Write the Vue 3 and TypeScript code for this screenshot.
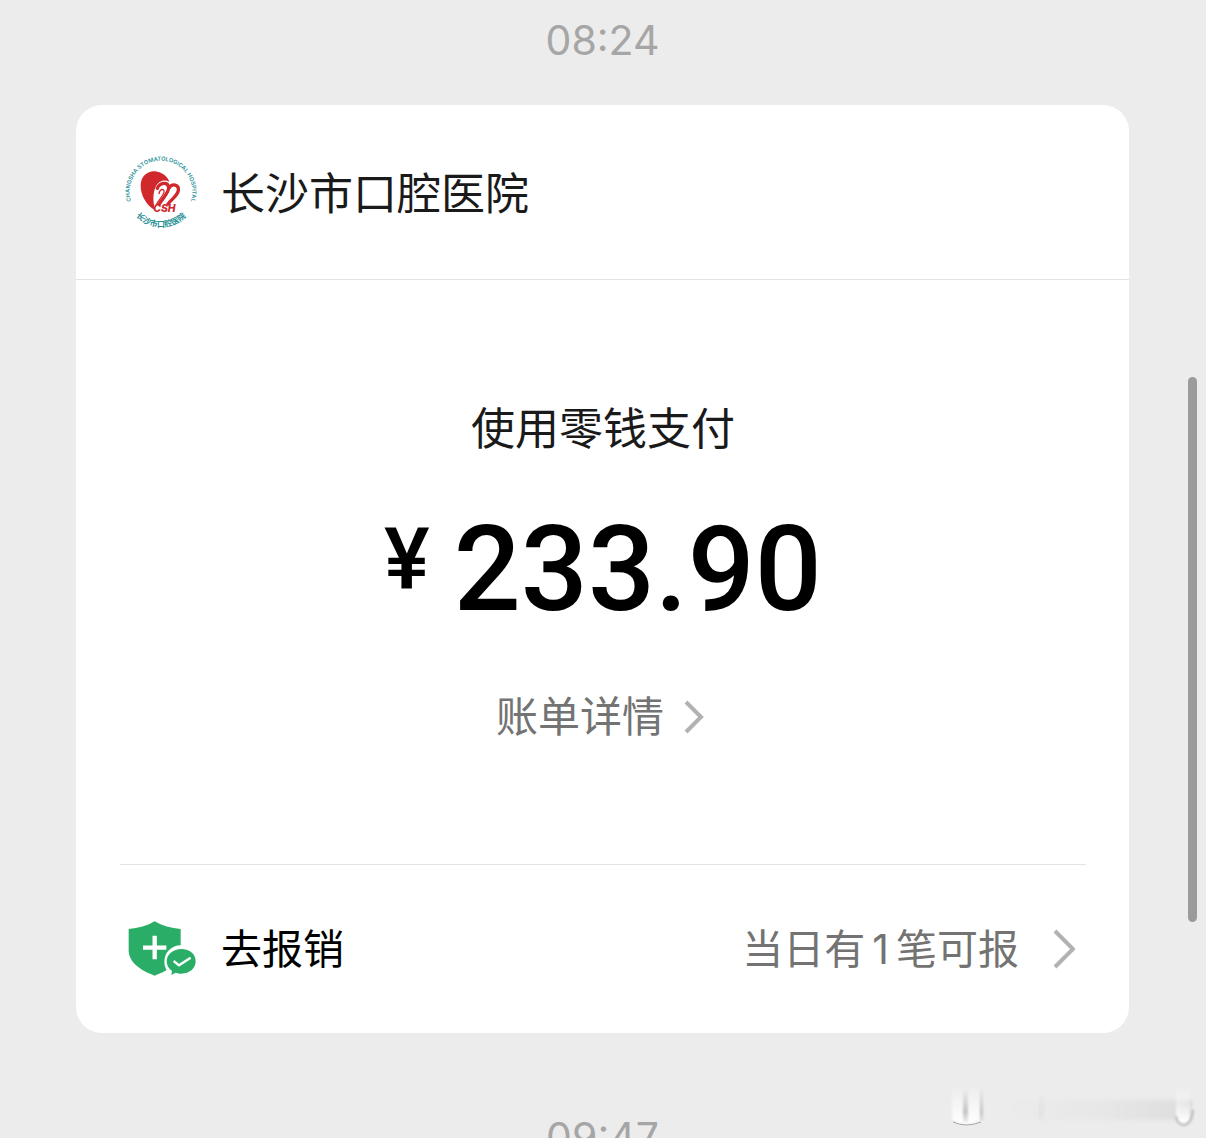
<script setup lang="ts">
interface Payment {
  merchant: string
  method: string
  amount: string
  claimable: number
}

const sentAt = '08:24'
const nextAt = '09:47'
const payment: Payment = {
  merchant: '长沙市口腔医院',
  method: '使用零钱支付',
  amount: '233.90',
  claimable: 1,
}
</script>

<template>
  <main class="chat">
    <time class="stamp">{{ sentAt }}</time>

    <article class="card">
      <header class="head">
        <svg class="logo" viewBox="0 0 222 222" role="img" aria-label="CSH">
          <defs>
            <path id="ring-top" d="M25 149 A94 94 0 1 1 197 149" />
            <path id="ring-bottom" d="M8 135 A106 106 0 0 0 214 135" />
          </defs>
          <text class="ring-en">
            <textPath href="#ring-top" startOffset="50%">CHANGSHA STOMATOLOGICAL HOSPITAL</textPath>
          </text>
          <text class="ring-zh">
            <textPath href="#ring-bottom" startOffset="50%">长沙市口腔医院</textPath>
          </text>
          <path
            class="red"
            d="M94 166 C66 150 50 120 50 92 C50 60 76 44 100 50 C118 54 132 66 136 80 C118 72 103 80 96 94 C86 114 86 140 94 166Z"
          />
          <path class="line" d="M100 100 C106 84 131 78 134 97 C136 112 117 128 106 147" />
          <path class="line" d="M136 98 C144 84 166 88 163 107 C160 123 143 132 132 147" />
          <path class="line thin" d="M105 116 C108 100 122 100 120 112 C117 124 104 134 97 149" />
          <text class="csh" x="88" y="171">CSH</text>
        </svg>
        <h1 class="merchant">{{ payment.merchant }}</h1>
      </header>

      <section class="body">
        <p class="method">{{ payment.method }}</p>
        <p class="amount"><span class="yen">¥</span><span>{{ payment.amount }}</span></p>
        <a class="detail" href="#bill">
          账单详情
          <svg class="chev" viewBox="0 0 20 34" aria-hidden="true"><path d="M2 2 L17 17 L2 32" /></svg>
        </a>
      </section>

      <a class="claim" href="#claim">
        <svg class="shield" viewBox="0 0 204 168" aria-hidden="true">
          <path
            class="green"
            d="M80 1 C102 14 129 22 158 24 V88 C158 124 122 149 80 164 C38 149 2 124 2 88 V24 C31 22 58 14 80 1Z"
          />
          <path class="plus" d="M80 44 V115 M45 80 H115" />
          <circle class="halo" cx="158" cy="122" r="49" />
          <path
            class="green"
            d="M160 84 C186 84 203 99 203 121 C203 143 184 158 160 158 C154 158 148 157 143 155 L130 162 L132 150 C122 143 116 133 116 121 C116 99 137 84 160 84Z"
          />
          <path class="tick" d="M137 120 L153 133 L188 110" />
        </svg>
        <span class="claim-name">去报销</span>
        <span class="claim-note">当日有<span class="count">{{ payment.claimable }}</span>笔可报</span>
        <svg class="chev big" viewBox="0 0 22 40" aria-hidden="true"><path d="M2 2 L20 20 L2 38" /></svg>
      </a>
    </article>

    <time class="stamp next">{{ nextAt }}</time>

    <span class="thumb" aria-hidden="true"></span>
    <svg class="smear" viewBox="0 0 256 60" aria-hidden="true">
      <defs>
        <linearGradient id="band" x1="0" x2="1" y1="0" y2="0">
          <stop offset="0" stop-color="#e6e6e6" stop-opacity="0" />
          <stop offset="0.5" stop-color="#e6e6e6" stop-opacity="0.7" />
          <stop offset="0.93" stop-color="#dedede" />
          <stop offset="1" stop-color="#cccccc" />
        </linearGradient>
        <linearGradient id="pill" x1="0" x2="0" y1="0" y2="1">
          <stop offset="0" stop-color="#fff" stop-opacity="0" />
          <stop offset="1" stop-color="#fff" />
        </linearGradient>
        <linearGradient id="shade" x1="0" x2="0" y1="0" y2="1">
          <stop offset="0" stop-color="#c4c4c4" stop-opacity="0" />
          <stop offset="0.7" stop-color="#c4c4c4" />
          <stop offset="1" stop-color="#c4c4c4" stop-opacity="0.3" />
        </linearGradient>
        <filter id="soft" x="-20%" y="-20%" width="140%" height="140%">
          <feGaussianBlur stdDeviation="2" />
        </filter>
        <filter id="faint" x="-50%" y="-20%" width="200%" height="140%">
          <feGaussianBlur stdDeviation="1" />
        </filter>
      </defs>
      <path d="M50 22 H246 V38 Q242 42 232 42 H50Z" fill="url(#band)" filter="url(#soft)" />
      <path d="M94 12 H99 V44 H94Z" fill="url(#shade)" opacity="0.25" filter="url(#soft)" />
      <path d="M7 8 H35 V42 Q21 50 7 42Z" fill="url(#pill)" filter="url(#faint)" />
      <path d="M18 10 H23 V44 H18Z M35 10 H38 V42 H35Z" fill="url(#shade)" filter="url(#faint)" />
      <path d="M8 44 Q21 50 36 44" fill="none" stroke="#a8a8a8" />
      <path d="M231 8 H245 V40 Q239 52 231 40Z" fill="url(#pill)" filter="url(#faint)" />
      <path d="M231 38 Q232 47 239 47 Q247 46 248 32" fill="none" stroke="#b8b8b8" stroke-width="2" filter="url(#faint)" />
    </svg>
  </main>
</template>

<style>
body {
  margin: 0;
  background: #ececec;
}
</style>

<style scoped>
.chat {
  position: relative;
  box-sizing: border-box;
  height: 100vh;
  overflow: hidden;
  padding: 16px 77px 0 76px;
  background: #ececec;
  font-family: Inter, "Noto Sans CJK SC", sans-serif;
  color: #1a1a1a;
}
.stamp {
  display: block;
  height: 48px;
  line-height: 48px;
  font-size: 41px;
  text-align: center;
  color: #a6a6a6;
}
.next {
  margin-top: 80px;
}
.card {
  margin-top: 41px;
  border-radius: 26px;
  background: #fff;
}
.head {
  display: flex;
  align-items: center;
  gap: 23px;
  height: 174px;
  padding-left: 48px;
  border-bottom: 1px solid #e4e4e4;
}
.logo {
  width: 74px;
  height: 74px;
  overflow: visible;
}
.ring-en {
  font: 600 17px Inter, sans-serif;
  fill: #2a9398;
  text-anchor: middle;
}
.ring-zh {
  font: 700 24px "Noto Sans CJK SC", sans-serif;
  fill: #1f8f94;
  text-anchor: middle;
}
.red {
  fill: #d0282c;
}
.line {
  fill: none;
  stroke: #d0282c;
  stroke-width: 10;
  stroke-linecap: round;
}
.thin {
  stroke-width: 4;
}
.csh {
  font: italic 800 31px Inter, sans-serif;
  fill: #d0282c;
}
.merchant {
  margin: 0;
  padding-top: 4px;
  font-size: 44px;
  line-height: 64px;
  font-weight: 400;
}
.body {
  display: flex;
  flex-direction: column;
  align-items: center;
  margin: 0 43px 0 44px;
  padding: 117px 0;
  border-bottom: 1px solid #e4e4e4;
}
.method {
  margin: 0;
  font-size: 44px;
  line-height: 64px;
}
.amount {
  display: flex;
  align-items: flex-start;
  gap: 24px;
  margin: 37px 0 45px;
  font-family: Roboto, sans-serif;
  font-weight: 500;
  font-size: 118px;
  line-height: 144px;
  color: #000;
}
.yen {
  font-size: 86px;
  line-height: 124px;
}
.detail {
  display: flex;
  align-items: center;
  gap: 20px;
  padding-right: 6px;
  font-size: 42px;
  line-height: 60px;
  color: #737373;
  text-decoration: none;
}
.chev {
  width: 20px;
  height: 34px;
  fill: none;
  stroke: #b2b2b2;
  stroke-width: 4;
}
.chev.big {
  width: 22px;
  height: 40px;
  margin-left: 34px;
}
.claim {
  display: flex;
  align-items: center;
  height: 168px;
  padding: 0 54px 0 52px;
  font-size: 41px;
  line-height: 60px;
  color: #000;
  text-decoration: none;
}
.shield {
  width: 68px;
  height: 56px;
  margin-right: 25px;
}
.green {
  fill: #2aae67;
}
.plus,
.tick {
  fill: none;
  stroke: #fff;
  stroke-width: 13;
}
.tick {
  stroke-width: 7;
}
.halo {
  fill: #fff;
}
.claim-note {
  margin-left: auto;
  color: #737373;
}
.count {
  margin: 0 7px;
}
.thumb {
  position: absolute;
  top: 377px;
  right: 9px;
  width: 9px;
  height: 545px;
  border-radius: 5px;
  background: #9b9b9b;
}
.smear {
  position: absolute;
  right: 5px;
  bottom: 0;
  width: 256px;
  height: 60px;
}
</style>
